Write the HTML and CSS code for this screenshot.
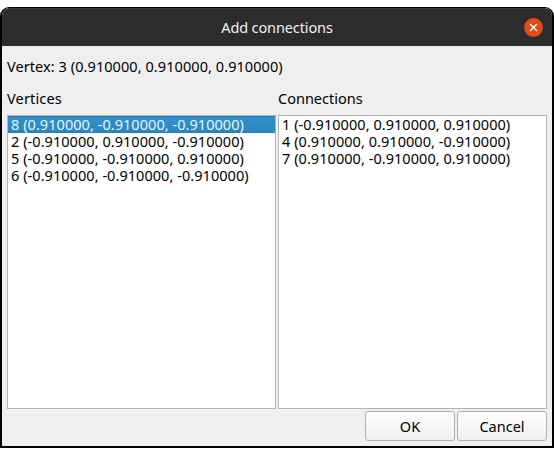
FILE: index.html
```html
<!DOCTYPE html>
<html lang="en">
<head>
<meta charset="utf-8">
<title>Add connections</title>
<link rel="stylesheet" href="styles.css">
</head>
<body>
<div class="window">
  <header class="titlebar">
    <h1 class="title">Add connections</h1>
    <button class="close" aria-label="Close">
      <svg width="19" height="19" viewBox="0 0 19 19"><circle cx="9.5" cy="9.5" r="9.4" fill="#e34c18"/><path d="M6 6l7 7M13 6l-7 7" stroke="#fff" stroke-width="1.4"/></svg>
    </button>
  </header>
  <main class="content">
    <p class="vertex">Vertex: 3 (0.910000, 0.910000, 0.910000)</p>
    <div class="columns">
      <section class="column">
        <h2 class="label">Vertices</h2>
        <ul class="list">
          <li class="selected">8 (0.910000, -0.910000, -0.910000)</li>
          <li>2 (-0.910000, 0.910000, -0.910000)</li>
          <li>5 (-0.910000, -0.910000, 0.910000)</li>
          <li>6 (-0.910000, -0.910000, -0.910000)</li>
        </ul>
      </section>
      <section class="column">
        <h2 class="label">Connections</h2>
        <ul class="list">
          <li>1 (-0.910000, 0.910000, 0.910000)</li>
          <li>4 (0.910000, 0.910000, -0.910000)</li>
          <li>7 (0.910000, -0.910000, 0.910000)</li>
        </ul>
      </section>
    </div>
    <div class="actions">
      <button class="button">OK</button>
      <button class="button">Cancel</button>
    </div>
  </main>
</div>
</body>
</html>
```
FILE: styles.css
```css
* { box-sizing: border-box; margin: 0; padding: 0; }
body {
  width: 554px;
  height: 457px;
  padding-top: 7px;
  overflow: hidden;
  background: #fff;
  color: #000;
  font: 14.5px/17px "Noto Sans", "Open Sans", sans-serif;
}
.window {
  display: flex;
  flex-direction: column;
  height: 441px;
  border: 2px solid #000;
  border-top-width: 1px;
  border-radius: 9px 9px 0 0;
  background: #efefef;
  overflow: hidden;
}
.titlebar {
  display: grid;
  grid-template-columns: 28px 1fr 28px;
  align-items: center;
  height: 38px;
  flex: none;
  background: #2c2c2c;
  border-top: 1px solid #393939;
  border-radius: 7px 7px 0 0;
  color: #f2f2f2;
}
.title {
  grid-column: 2;
  font-size: 14.5px;
  font-weight: 400;
  letter-spacing: -0.12px;
  text-align: center;
}
.close { width: 19px; height: 19px; border: 0; background: none; }
.close svg { display: block; }
.content {
  display: flex;
  flex-direction: column;
  flex: 1;
  padding: 12px 5px 5px;
}
.vertex { height: 32px; letter-spacing: 0.07px; }
.columns { display: grid; grid-template-columns: 1fr 1fr; gap: 2px; flex: 1; }
.column { display: flex; flex-direction: column; }
.label { font-size: 14.5px; font-weight: 400; height: 25px; }
.column:first-child .label { letter-spacing: 0.15px; }
.list {
  flex: 1;
  border: 1px solid #b4b4b4;
  background: #fff;
  list-style: none;
  letter-spacing: 0.05px;
}
.list li { height: 17px; padding-left: 3px; white-space: nowrap; }
.list .selected {
  background: linear-gradient(#3191cd, #2d86be);
  box-shadow: inset 0 1px #2b7eb4, inset 0 -1px #2b7eb4;
  color: #e9f3fa;
}
.actions { display: flex; justify-content: flex-end; gap: 2px; padding-top: 2px; }
.button {
  width: 90px;
  height: 30px;
  border: 1px solid #b0b0b0;
  border-radius: 3px;
  background: linear-gradient(#fefefe, #efefef);
  color: #000;
  font: inherit;
}
```
